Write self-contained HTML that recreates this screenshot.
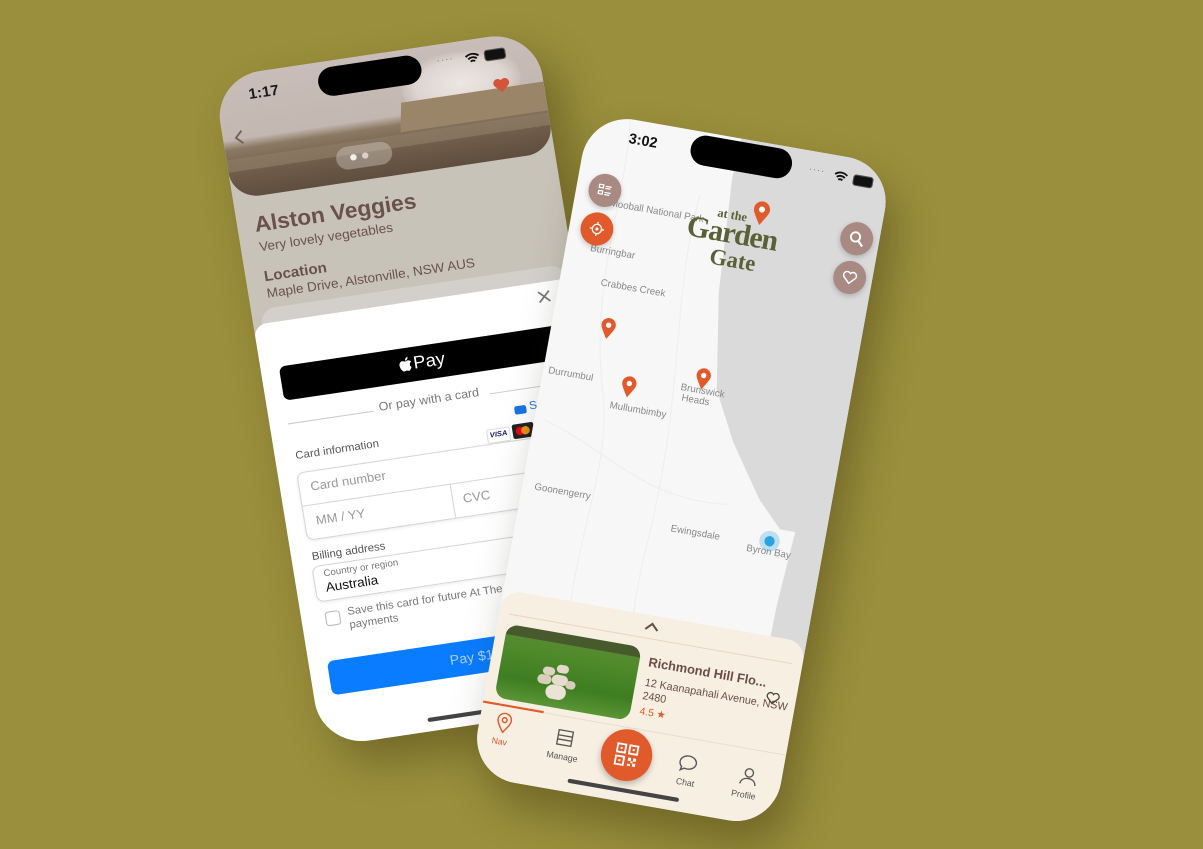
<!DOCTYPE html>
<html><head><meta charset="utf-8">
<style>
html,body{margin:0;padding:0}
body{width:1203px;height:849px;overflow:hidden;background:#9a8f3c;position:relative;font-family:"Liberation Sans",sans-serif}
.ph{position:absolute;left:0;top:0;width:300px;height:650px;transform-origin:0 0;border-radius:44px;overflow:hidden}
.abs{position:absolute}
.shadow{position:absolute;left:0;top:0;width:300px;height:650px;transform-origin:0 0;border-radius:44px;box-shadow:14px 22px 40px rgba(40,35,5,.35)}
.t{position:absolute;white-space:nowrap}
</style></head><body>

<div class="shadow" style="transform:matrix(1.073,-0.16,0.168,1.03,213,78)"></div>
<!-- LEFT PHONE -->
<div class="ph" style="transform:matrix(1.073,-0.16,0.168,1.03,213,78);background:#c8c3b8">
  <div class="abs" style="left:0;top:0;width:300px;height:118px;border-radius:0 0 26px 26px;overflow:hidden;background:linear-gradient(180deg,#c8bdb8 0%,#c3b7b1 52%,#8c7963 60%,#6f5c49 80%,#5f4e3e 100%)">
    <div class="abs" style="left:170px;top:10px;width:110px;height:60px;border-radius:40px;background:radial-gradient(ellipse at center,#ece7e3 0%,#ddd4cf 55%,rgba(210,200,195,0) 75%)"></div>
    <div class="abs" style="left:165px;top:50px;width:140px;height:28px;background:#9a8569;transform:skewX(-10deg)"></div>
    <div class="abs" style="left:0;top:80px;width:300px;height:12px;background:#8f7b65;opacity:.7"></div>
    <div class="abs" style="left:100px;top:84px;width:52px;height:22px;border-radius:11px;background:rgba(230,225,220,.35)"></div>
    <div class="abs" style="left:113px;top:92px;width:6px;height:6px;border-radius:3px;background:#f3efec"></div>
    <div class="abs" style="left:124px;top:92px;width:6px;height:6px;border-radius:3px;background:#d8d0c9"></div>
  </div>
  <div class="t" style="left:30px;top:12px;font-size:14px;font-weight:bold;color:#1b1a18">1:17</div>
  <div class="abs" style="left:95px;top:6px;width:96px;height:28px;border-radius:14px;background:#000"></div>
  <div class="t" style="left:206px;top:10px;font-size:9px;color:#777;letter-spacing:1px">····</div>
  <svg class="abs" style="left:232px;top:12px" width="14" height="11" viewBox="0 0 14 11"><path d="M1 4a9 9 0 0 1 12 0M3 6.5a6 6 0 0 1 8 0M5 9a3 3 0 0 1 4 0" stroke="#111" stroke-width="1.8" fill="none"/></svg>
  <div class="abs" style="left:250px;top:12px;width:18px;height:9px;border-radius:3px;background:#111;border:1px solid #555"></div>
  <svg class="abs" style="left:253px;top:40px" width="17" height="15" viewBox="0 0 24 22"><path d="M12 21 2.5 11.5A5.5 5.5 0 0 1 12 4a5.5 5.5 0 0 1 9.5 7.5Z" fill="#d4553a"/></svg>
  <svg class="abs" style="left:10px;top:52px" width="10" height="16" viewBox="0 0 10 16"><path d="M8 2 2 8l6 6" stroke="#6d625c" stroke-width="1.8" fill="none"/></svg>
  <div class="t" style="left:16px;top:134px;font-size:21px;font-weight:bold;color:#6a514c">Alston Veggies</div>
  <div class="t" style="left:17px;top:160px;font-size:12.5px;color:#6a514c">Very lovely vegetables</div>
  <div class="t" style="left:17px;top:187px;font-size:14px;font-weight:bold;color:#6a514c">Location</div>
  <div class="t" style="left:17px;top:205px;font-size:12.5px;color:#6a514c">Maple Drive, Alstonville, NSW AUS</div>
  <div class="abs" style="left:8px;top:226px;width:284px;height:40px;border-radius:14px;background:#d3d0cc"></div>
  <!-- sheet -->
  <div class="abs" style="left:0;top:240px;width:300px;height:410px;background:#fff;border-radius:12px 12px 0 0"></div>
  <svg class="abs" style="left:263px;top:248px" width="12" height="12" viewBox="0 0 12 12"><path d="M1 1l10 10M11 1 1 11" stroke="#777" stroke-width="1.6"/></svg>
  <div class="abs" style="left:17px;top:283px;width:280px;height:33px;border-radius:6px;background:#000"></div>
  <svg class="abs" style="left:126px;top:291px" width="13" height="16" viewBox="0 0 13 16"><path d="M10.6 8.5c0-1.9 1.6-2.8 1.6-2.8-.9-1.3-2.3-1.5-2.8-1.5-1.2-.1-2.3.7-2.9.7-.6 0-1.5-.7-2.5-.7C2.7 4.2 1 5.5 1 8.1c0 1.6.6 3.3 1.4 4.4.6.9 1.2 1.7 2.1 1.7.8 0 1.2-.5 2.2-.5 1 0 1.3.5 2.2.5.9 0 1.5-.9 2-1.7.6-.9.9-1.8.9-1.9 0 0-1.7-.7-1.2-2.1ZM8.8 3c.5-.6.8-1.4.7-2.2-.7 0-1.5.5-2 1.1-.4.5-.8 1.3-.7 2.1.8.1 1.5-.4 2-1Z" fill="#fff"/></svg>
  <div class="t" style="left:140px;top:289px;font-size:17px;color:#fff">Pay</div>
  <div class="abs" style="left:17px;top:338px;width:80px;height:1px;background:#ccc"></div>
  <div class="abs" style="left:205px;top:338px;width:90px;height:1px;background:#ccc"></div>
  <div class="t" style="left:102px;top:330px;font-size:11.5px;color:#777">Or pay with a card</div>
  <div class="abs" style="left:225px;top:354px;width:11px;height:8px;border-radius:2px;background:#1a73e8"></div>
  <div class="t" style="left:239px;top:350px;font-size:11px;color:#1a73e8">Scan card</div>
  <div class="t" style="left:19px;top:364px;font-size:10.5px;color:#555">Card information</div>
  <div class="abs" style="left:196px;top:372px;width:20px;height:12px;border:1px solid #ddd;border-radius:2px;font-size:7px;font-weight:bold;font-style:italic;color:#1a1f71;text-align:center;line-height:12px">VISA</div>
  <div class="abs" style="left:220px;top:371px;width:20px;height:14px;border-radius:2px;background:#222"><div class="abs" style="left:3px;top:3px;width:8px;height:8px;border-radius:4px;background:#eb001b"></div><div class="abs" style="left:8px;top:3px;width:8px;height:8px;border-radius:4px;background:#f79e1b;opacity:.9"></div></div>
  <div class="abs" style="left:244px;top:371px;width:20px;height:14px;border-radius:2px;background:#1f6fd1"></div>
  <div class="abs" style="left:17px;top:386px;width:290px;height:64px;border:1px solid #d6d6d6;border-radius:7px;box-shadow:0 1px 3px rgba(0,0,0,.08)"></div>
  <div class="abs" style="left:17px;top:418px;width:290px;height:1px;background:#d6d6d6"></div>
  <div class="abs" style="left:155px;top:418px;width:1px;height:33px;background:#d6d6d6"></div>
  <div class="t" style="left:28px;top:394px;font-size:12px;color:#999">Card number</div>
  <div class="t" style="left:28px;top:427px;font-size:12px;color:#999">MM / YY</div>
  <div class="t" style="left:165px;top:427px;font-size:12px;color:#999">CVC</div>
  <div class="t" style="left:19px;top:462px;font-size:10.5px;color:#555">Billing address</div>
  <div class="abs" style="left:17px;top:477px;width:290px;height:33px;border:1px solid #d6d6d6;border-radius:7px;box-shadow:0 1px 3px rgba(0,0,0,.08)"></div>
  <div class="t" style="left:27px;top:480px;font-size:9px;color:#777">Country or region</div>
  <div class="t" style="left:27px;top:492px;font-size:12.5px;color:#111">Australia</div>
  <div class="abs" style="left:22px;top:522px;width:12px;height:12px;border:1px solid #bbb;border-radius:3px"></div>
  <div class="t" style="left:43px;top:519px;font-size:10.5px;color:#777;line-height:13px">Save this card for future At The Garden Gate<br>payments</div>
  <div class="abs" style="left:17px;top:569px;width:290px;height:33px;border-radius:6px;background:#0a7cff;color:#a9d0ff;font-size:13px;text-align:center;line-height:33px">Pay $12.00</div>
  <div class="abs" style="left:100px;top:637px;width:110px;height:4px;border-radius:2px;background:#444"></div>
</div>

<div class="shadow" style="transform:matrix(1.01,0.177,-0.185,1.02,590,112)"></div>
<!-- RIGHT PHONE -->
<div class="ph" style="transform:matrix(1.01,0.177,-0.185,1.02,590,112);background:#f7f7f7">
  <svg class="abs" style="left:0;top:0" width="300" height="650" viewBox="0 0 300 650">
    <path d="M150 0H300V650H262L265 440L270 365L255 365L230 340L195 290L170 243L155 150L148 40Z" fill="#dadada"/>
    <path d="M40 0C50 80 30 160 60 260S40 420 90 650M120 60C110 160 140 250 130 400S160 520 150 650M10 300C80 320 120 360 200 350" stroke="#efefef" stroke-width="1.2" fill="none"/>
  </svg>
  <div class="t" style="left:35px;top:78px;font-size:9.5px;color:#888">Mooball National Park</div>
  <div class="t" style="left:24px;top:124px;font-size:9.5px;color:#888">Burringbar</div>
  <div class="t" style="left:40px;top:155px;font-size:9.5px;color:#888">Crabbes Creek</div>
  <div class="t" style="left:5px;top:247px;font-size:9.5px;color:#888">Durrumbul</div>
  <div class="t" style="left:70px;top:270px;font-size:9.5px;color:#888">Mullumbimby</div>
  <div class="t" style="left:135px;top:242px;font-size:9.5px;color:#888;line-height:10px">Brunswick<br>&nbsp;Heads</div>
  <div class="t" style="left:12px;top:360px;font-size:9.5px;color:#888">Goonengerry</div>
  <div class="t" style="left:150px;top:377px;font-size:9.5px;color:#888">Ewingsdale</div>
  <div class="t" style="left:226px;top:383px;font-size:9.5px;color:#888">Byron Bay</div>
  <div class="abs" style="left:237px;top:368px;width:20px;height:20px;border-radius:10px;background:rgba(64,170,230,.3)"></div>
  <div class="abs" style="left:242px;top:373px;width:10px;height:10px;border-radius:5px;background:#2aa4e4"></div>
  <!-- pins -->
  <svg class="abs" style="left:47px;top:192px" width="16" height="22" viewBox="0 0 16 22"><path d="M8 21C3 13 1 10 1 7.5a7 7 0 0 1 14 0C15 10 13 13 8 21Z" fill="#e05a2b"/><circle cx="8" cy="7.5" r="2.6" fill="#fff"/></svg>
  <svg class="abs" style="left:77px;top:244px" width="16" height="22" viewBox="0 0 16 22"><path d="M8 21C3 13 1 10 1 7.5a7 7 0 0 1 14 0C15 10 13 13 8 21Z" fill="#e05a2b"/><circle cx="8" cy="7.5" r="2.6" fill="#fff"/></svg>
  <svg class="abs" style="left:147px;top:224px" width="16" height="22" viewBox="0 0 16 22"><path d="M8 21C3 13 1 10 1 7.5a7 7 0 0 1 14 0C15 10 13 13 8 21Z" fill="#e05a2b"/><circle cx="8" cy="7.5" r="2.6" fill="#fff"/></svg>
  <!-- status -->
  <div class="t" style="left:42px;top:10px;font-size:14px;font-weight:bold;color:#111">3:02</div>
  <div class="abs" style="left:103px;top:3px;width:100px;height:29px;border-radius:15px;background:#000"></div>
  <div class="t" style="left:220px;top:12px;font-size:9px;color:#777;letter-spacing:1px">····</div>
  <svg class="abs" style="left:245px;top:14px" width="14" height="11" viewBox="0 0 14 11"><path d="M1 4a9 9 0 0 1 12 0M3 6.5a6 6 0 0 1 8 0M5 9a3 3 0 0 1 4 0" stroke="#111" stroke-width="1.8" fill="none"/></svg>
  <div class="abs" style="left:264px;top:15px;width:18px;height:9px;border-radius:3px;background:#111;border:1px solid #555"></div>
  <!-- buttons -->
  <div class="abs" style="left:12px;top:56px;width:32px;height:32px;border-radius:16px;background:#a98a82;box-shadow:0 2px 5px rgba(0,0,0,.2)">
    <svg class="abs" style="left:9px;top:9px" width="14" height="14" viewBox="0 0 14 14"><path d="M1 2h4v3H1zM1 8h4v3H1zM7 3h6M7 5h5M7 9h6M7 11h5" stroke="#fff" stroke-width="1.2" fill="none"/></svg></div>
  <div class="abs" style="left:11px;top:94px;width:32px;height:32px;border-radius:16px;background:#e05a2b;box-shadow:0 2px 5px rgba(0,0,0,.2)">
    <svg class="abs" style="left:8px;top:8px" width="16" height="16" viewBox="0 0 16 16"><circle cx="8" cy="8" r="4.5" stroke="#fff" stroke-width="1.3" fill="none"/><circle cx="8" cy="8" r="1.5" fill="#fff"/><path d="M8 1v2.5M8 12.5V15M1 8h2.5M12.5 8H15" stroke="#fff" stroke-width="1.3"/></svg></div>
  <div class="abs" style="left:262px;top:60px;width:32px;height:32px;border-radius:16px;background:#a98a82;box-shadow:0 2px 5px rgba(0,0,0,.2)">
    <svg class="abs" style="left:8px;top:8px" width="16" height="16" viewBox="0 0 16 16"><circle cx="6.5" cy="6.5" r="4.5" stroke="#fff" stroke-width="1.8" fill="none"/><path d="M10 10l4.5 4.5" stroke="#fff" stroke-width="2"/></svg></div>
  <div class="abs" style="left:262px;top:98px;width:32px;height:32px;border-radius:16px;background:#a98a82;box-shadow:0 2px 5px rgba(0,0,0,.2)">
    <svg class="abs" style="left:8px;top:9px" width="16" height="14" viewBox="0 0 24 22"><path d="M12 20 3 11a5 5 0 0 1 9-6 5 5 0 0 1 9 6Z" stroke="#fff" stroke-width="2.2" fill="none"/></svg></div>
  <!-- logo -->
  <div class="t" style="left:140px;top:67px;font-family:'Liberation Serif',serif;font-weight:bold;font-size:12px;color:#5a6137">at the</div>
  <div class="t" style="left:113px;top:76px;font-family:'Liberation Serif',serif;font-weight:bold;font-size:29px;color:#5a6137;letter-spacing:-1px">Garden</div>
  <div class="t" style="left:140px;top:104px;font-family:'Liberation Serif',serif;font-weight:bold;font-size:22px;color:#5a6137">Gate</div>
  <svg class="abs" style="left:173px;top:55px" width="18" height="26" viewBox="0 0 16 22"><path d="M8 21C3 13 1 10 1 7.5a7 7 0 0 1 14 0C15 10 13 13 8 21Z" fill="#e05a2b"/><circle cx="8" cy="7.5" r="2.6" fill="#fff"/></svg>
  <!-- bottom panel -->
  <div class="abs" style="left:0;top:468px;width:300px;height:182px;background:#f7efe2;border-radius:18px 18px 0 0"></div>
  <div class="abs" style="left:10px;top:490px;width:280px;height:1px;background:#ecd3c6"></div>
  <svg class="abs" style="left:141px;top:474px" width="16" height="10" viewBox="0 0 16 10"><path d="M2 8l6-6 6 6" stroke="#6b4d47" stroke-width="2" fill="none"/></svg>
  <div class="abs" style="left:10px;top:500px;width:133px;height:72px;border-radius:11px;overflow:hidden;background:linear-gradient(180deg,#5d8a34 0%,#4f8a2b 30%,#3f7d22 70%,#5a9536 100%)">
    <div class="abs" style="left:0;top:0;width:133px;height:10px;background:#3a3a2a;opacity:.6"></div>
    <div class="abs" style="left:42px;top:34px;width:12px;height:8px;border-radius:6px;background:#ddd3c3"></div>
    <div class="abs" style="left:55px;top:30px;width:12px;height:8px;border-radius:6px;background:#e2d9ca"></div>
    <div class="abs" style="left:38px;top:42px;width:14px;height:9px;border-radius:7px;background:#d9cebc"></div>
    <div class="abs" style="left:52px;top:40px;width:16px;height:10px;border-radius:8px;background:#e5dccd"></div>
    <div class="abs" style="left:48px;top:50px;width:20px;height:14px;border-radius:10px;background:#ebe3d5"></div>
    <div class="abs" style="left:66px;top:44px;width:10px;height:8px;border-radius:5px;background:#d8cdbb"></div>
  </div>
  <div class="t" style="left:152px;top:506px;font-size:12.5px;font-weight:bold;color:#6b4d47">Richmond Hill Flo...</div>
  <div class="t" style="left:152px;top:527px;font-size:10.5px;color:#6b4d47;line-height:13px">12 Kaanapahali Avenue, NSW<br>2480</div>
  <div class="t" style="left:152px;top:556px;font-size:10px;color:#e05a2b">4.5 ★</div>
  <svg class="abs" style="left:270px;top:520px" width="15" height="13" viewBox="0 0 24 22"><path d="M12 20 3 11a5 5 0 0 1 9-6 5 5 0 0 1 9 6Z" stroke="#4a4a3a" stroke-width="2.2" fill="none"/></svg>
  <div class="abs" style="left:0;top:578px;width:300px;height:1px;background:#ecdcd0"></div>
  <div class="abs" style="left:0;top:577px;width:60px;height:2px;background:#e05a2b"></div>
  <svg class="abs" style="left:16px;top:585px" width="16" height="20" viewBox="0 0 16 20"><path d="M8 19C3 12 1.5 9.5 1.5 7a6.5 6.5 0 0 1 13 0C14.5 9.5 13 12 8 19Z" stroke="#e05a2b" stroke-width="1.4" fill="none"/><circle cx="8" cy="7" r="2.3" stroke="#e05a2b" stroke-width="1.4" fill="none"/></svg>
  <div class="t" style="left:15px;top:608px;font-size:8.5px;color:#e05a2b">Nav</div>
  <svg class="abs" style="left:76px;top:590px" width="18" height="18" viewBox="0 0 18 18"><path d="M2 2h14v5H2zM2 7v9h14V7M2 11h14" stroke="#555" stroke-width="1.3" fill="none"/></svg>
  <div class="t" style="left:70px;top:612px;font-size:8.5px;color:#555">Manage</div>
  <div class="abs" style="left:122px;top:580px;width:50px;height:50px;border-radius:25px;background:#e05a2b;box-shadow:0 3px 6px rgba(0,0,0,.25)">
    <svg class="abs" style="left:14px;top:14px" width="22" height="22" viewBox="0 0 22 22"><path d="M1 1h8v8H1zM13 1h8v8h-8zM1 13h8v8H1z" stroke="#fff" stroke-width="1.8" fill="none"/><path d="M4 4h2v2H4zM16 4h2v2h-2zM4 16h2v2H4zM13 13h3v3h-3zM18 13h3v3h-3zM16 16h2v2h-2zM13 19h3v2h-3zM18 18h3v3h-3z" fill="#fff"/></svg></div>
  <svg class="abs" style="left:198px;top:594px" width="19" height="18" viewBox="0 0 19 18"><path d="M9.5 1.5c4.4 0 8 2.8 8 6.3s-3.6 6.3-8 6.3c-1 0-2-.1-2.9-.4L3 16l.8-3.4C2.4 11.5 1.5 9.7 1.5 7.8c0-3.500 3.6-6.3 8-6.3Z" stroke="#555" stroke-width="1.3" fill="none"/></svg>
  <div class="t" style="left:199px;top:616px;font-size:8.5px;color:#555">Chat</div>
  <svg class="abs" style="left:259px;top:596px" width="18" height="18" viewBox="0 0 18 18"><circle cx="9" cy="5.5" r="4" stroke="#555" stroke-width="1.3" fill="none"/><path d="M1.5 17c.5-4 3.5-6 7.5-6s7 2 7.5 6" stroke="#555" stroke-width="1.3" fill="none"/></svg>
  <div class="t" style="left:254px;top:618px;font-size:8.5px;color:#555">Profile</div>
  <div class="abs" style="left:95px;top:637px;width:110px;height:4px;border-radius:2px;background:#444"></div>
</div>
</body></html>
